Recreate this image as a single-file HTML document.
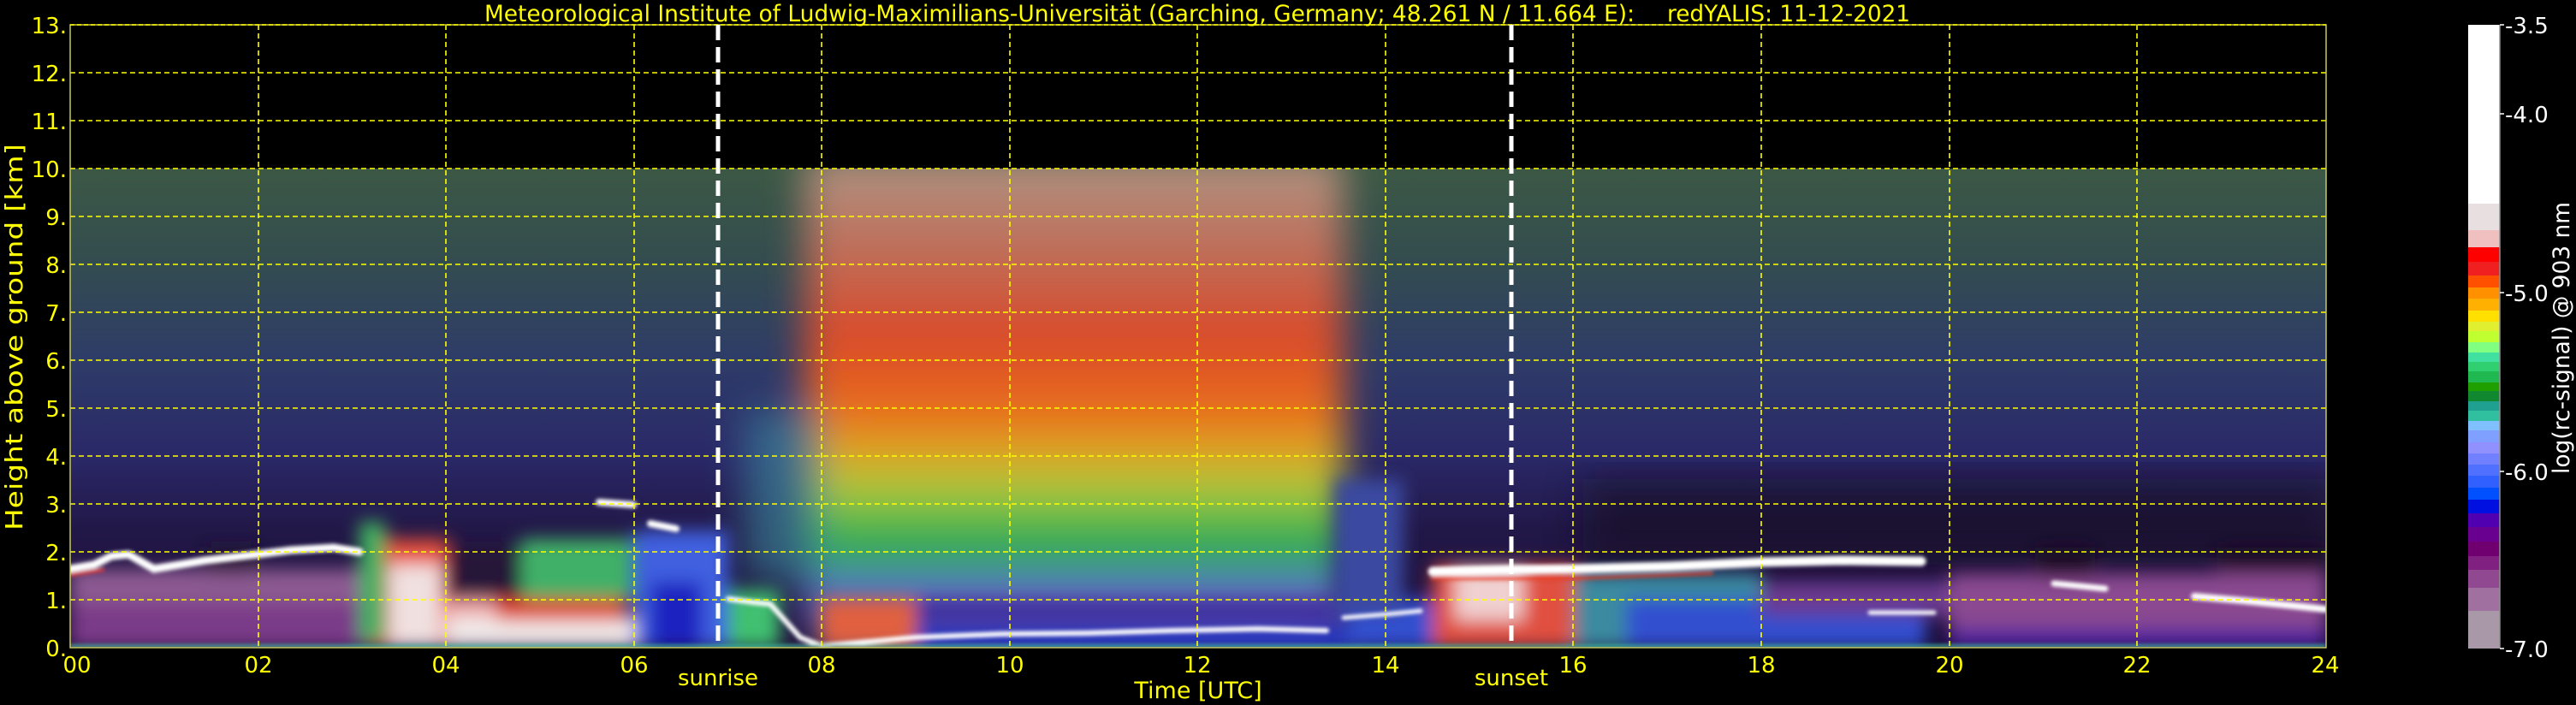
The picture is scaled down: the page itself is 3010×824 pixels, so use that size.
<!DOCTYPE html>
<html><head><meta charset="utf-8"><style>
html,body{margin:0;padding:0;background:#000;}
svg{display:block;}
text{font-family:"DejaVu Sans","Liberation Sans",sans-serif;}
</style></head><body>
<svg width="3010" height="824" viewBox="0 0 3010 824" xmlns="http://www.w3.org/2000/svg">
<defs>
<linearGradient id="bg" x1="0" y1="197" x2="0" y2="757" gradientUnits="userSpaceOnUse">
<stop offset="0" stop-color="#3c5844"/>
<stop offset="0.2" stop-color="#334c50"/>
<stop offset="0.4" stop-color="#2e3c68"/>
<stop offset="0.6" stop-color="#2a2868"/>
<stop offset="0.75" stop-color="#221848"/>
<stop offset="1" stop-color="#1a0c36"/>
</linearGradient>
<linearGradient id="mid" x1="0" y1="197" x2="0" y2="757" gradientUnits="userSpaceOnUse">
<stop offset="0" stop-color="#b0907e"/>
<stop offset="0.15" stop-color="#bc725e"/>
<stop offset="0.35" stop-color="#d84a2a"/>
<stop offset="0.5" stop-color="#e86a1e"/>
<stop offset="0.6" stop-color="#dcaa22"/>
<stop offset="0.68" stop-color="#a0c840"/>
<stop offset="0.76" stop-color="#38b050"/>
<stop offset="0.82" stop-color="#30a060"/>
<stop offset="0.88" stop-color="#6078e0"/>
<stop offset="0.93" stop-color="#502890"/>
<stop offset="0.97" stop-color="#d0d0e8"/>
<stop offset="1" stop-color="#2040e0"/>
</linearGradient>
<filter id="b1" x="-20%" y="-20%" width="140%" height="140%"><feGaussianBlur stdDeviation="22"/></filter>
<filter id="b2" x="-20%" y="-20%" width="140%" height="140%"><feGaussianBlur stdDeviation="10"/></filter>
<filter id="b3" x="-20%" y="-20%" width="140%" height="140%"><feGaussianBlur stdDeviation="2"/></filter>
<clipPath id="pc"><rect x="82" y="197" width="2636" height="560"/></clipPath>
</defs>

<g clip-path="url(#pc)">
<rect x="82" y="197" width="2636" height="560" fill="url(#bg)"/>
<rect x="1850" y="560" width="880" height="100" fill="#120a22" opacity="0.6" filter="url(#b1)"/>
<g filter="url(#b1)">
<rect x="940" y="180" width="630" height="560" fill="url(#mid)"/>
<rect x="870" y="480" width="90" height="200" fill="#3a90a0" opacity="0.6"/>
</g>
<g filter="url(#b2)">
<rect x="82" y="665" width="350" height="92" fill="#8c5a92"/>
<rect x="82" y="705" width="350" height="52" fill="#7a3a88"/>
<rect x="240" y="640" width="60" height="30" fill="#241430"/>
<rect x="433" y="630" width="90" height="127" fill="#e8503a"/>
<rect x="455" y="660" width="60" height="97" fill="#f0e0e0"/>
<rect x="420" y="610" width="30" height="140" fill="#40b060"/>
<rect x="521" y="640" width="90" height="60" fill="#261838"/>
<rect x="521" y="700" width="100" height="57" fill="#f0a0a0"/>
<rect x="521" y="720" width="220" height="37" fill="#f0e8e8"/>
<rect x="580" y="700" width="150" height="25" fill="#e04020"/>
<rect x="609" y="630" width="130" height="70" fill="#40b068"/>
<rect x="741" y="620" width="110" height="137" fill="#4060e0"/>
<rect x="760" y="680" width="60" height="77" fill="#1a20c0"/>
<rect x="851" y="690" width="60" height="67" fill="#40c070"/>
<rect x="960" y="700" width="110" height="57" fill="#e06040"/>
<rect x="1070" y="700" width="500" height="30" fill="#4030a0"/>
<rect x="1070" y="735" width="520" height="22" fill="#2038d0"/>
<rect x="1574" y="700" width="100" height="57" fill="#3050d0"/>
<rect x="1560" y="560" width="80" height="160" fill="#3a4aa0"/>
<rect x="1674" y="660" width="170" height="97" fill="#e05040"/>
<rect x="1700" y="665" width="80" height="60" fill="#f0d0d0"/>
<rect x="1839" y="670" width="220" height="87" fill="#3a8aa0"/>
<rect x="1900" y="700" width="350" height="57" fill="#3050d0"/>
<rect x="2058" y="680" width="220" height="40" fill="#6a3a90"/>
<rect x="2278" y="670" width="440" height="87" fill="#8a4a90"/>
<rect x="2278" y="735" width="440" height="22" fill="#5020a0"/>
<rect x="2378" y="640" width="70" height="35" fill="#1a1026"/>
<rect x="2590" y="640" width="128" height="30" fill="#1a1026"/>
</g>
<g filter="url(#b3)" fill="none" stroke-linecap="round">
<path d="M82 665 L110 660 L130 650 L150 648 L180 665 L240 655 L300 648 L340 643 L390 640 L420 645" stroke="#fff" stroke-width="9"/>
<path d="M82 672 L120 666" stroke="#e04040" stroke-width="4"/>
<path d="M1674 668 L1760 666 L1840 665 L1950 662 L2058 657 L2150 655 L2245 656" stroke="#fff" stroke-width="11"/>
<path d="M1674 676 L1840 676 L2000 670" stroke="#f04020" stroke-width="4" opacity="0.8"/>
<path d="M2564 697 L2620 702 L2680 708 L2717 712" stroke="#fff" stroke-width="8"/>
<path d="M2400 682 L2460 688" stroke="#fff" stroke-width="7"/>
<path d="M2185 716 L2260 716" stroke="#fff" stroke-width="5"/>
<path d="M700 587 L740 590 M760 612 L790 618" stroke="#fff" stroke-width="8"/>
<path d="M851 700 L880 704 L900 706 L935 745 L960 755 L1070 745 L1170 741 L1270 740 L1370 737 L1470 735 L1550 737" stroke="#fff" stroke-width="6"/>
<path d="M1570 722 L1620 718 L1660 714" stroke="#fff" stroke-width="5"/>
<path d="M82 755 L2717 755" stroke="#40c0a0" stroke-width="3"/>
</g>
</g>

<g stroke="#ffff00" stroke-width="1.6" stroke-dasharray="6,4" fill="none">
<path d="M82 85H2718M82 141H2718M82 197H2718M82 253H2718M82 309H2718M82 365H2718M82 421H2718M82 477H2718M82 533H2718M82 589H2718M82 645H2718M82 701H2718"/>
<path d="M302 29V757M521 29V757M741 29V757M960 29V757M1180 29V757M1399 29V757M1619 29V757M1838 29V757M2058 29V757M2278 29V757M2497 29V757"/>
</g>
<rect x="82" y="29" width="2636" height="728" fill="none" stroke="#c8c860" stroke-width="1.5"/>
<path d="M82 29H2718" stroke="#ffff00" stroke-width="1.5" stroke-dasharray="5,3"/>
<g stroke="#fff" stroke-width="5" stroke-dasharray="18,8">
<path d="M839 29V757"/><path d="M1766 29V757"/>
</g>

<text x="566" y="25" font-size="27" fill="#ffff00" textLength="1344" lengthAdjust="spacingAndGlyphs">Meteorological Institute of Ludwig-Maximilians-Universität (Garching, Germany; 48.261 N / 11.664 E):</text>
<text x="1948" y="25" font-size="27" fill="#ffff00" textLength="284" lengthAdjust="spacingAndGlyphs">redYALIS: 11-12-2021</text>

<g font-size="26" fill="#ffff00" text-anchor="end">
<text x="78" y="39">13.</text><text x="78" y="95">12.</text><text x="78" y="151">11.</text><text x="78" y="207">10.</text>
<text x="78" y="263">9.</text><text x="78" y="319">8.</text><text x="78" y="375">7.</text><text x="78" y="431">6.</text>
<text x="78" y="487">5.</text><text x="78" y="543">4.</text><text x="78" y="599">3.</text><text x="78" y="655">2.</text>
<text x="78" y="711">1.</text><text x="78" y="767">0.</text>
</g>
<text transform="translate(26,394) rotate(-90)" font-size="28" fill="#ffff00" text-anchor="middle" textLength="452" lengthAdjust="spacingAndGlyphs">Height above ground [km]</text>

<g font-size="26" fill="#ffff00" text-anchor="middle">
<text x="90" y="786">00</text><text x="302" y="786">02</text><text x="521" y="786">04</text><text x="741" y="786">06</text>
<text x="960" y="786">08</text><text x="1180" y="786">10</text><text x="1399" y="786">12</text><text x="1619" y="786">14</text>
<text x="1838" y="786">16</text><text x="2058" y="786">18</text><text x="2278" y="786">20</text><text x="2497" y="786">22</text>
<text x="2717" y="786">24</text>
<text x="839" y="801">sunrise</text><text x="1766" y="801">sunset</text>
<text x="1400" y="816" font-size="27">Time [UTC]</text>
</g>

<g>
<rect x="2884" y="29" width="37" height="209" fill="#ffffff"/>
<rect x="2884" y="238" width="37" height="31" fill="#e8e0e0"/>
<rect x="2884" y="269" width="37" height="20" fill="#f0c0c0"/>
<rect x="2884" y="289" width="37" height="17" fill="#ff0000"/>
<rect x="2884" y="306" width="37" height="16" fill="#f02020"/>
<rect x="2884" y="322" width="37" height="14" fill="#ff5000"/>
<rect x="2884" y="336" width="37" height="13" fill="#ff9000"/>
<rect x="2884" y="349" width="37" height="14" fill="#ffb000"/>
<rect x="2884" y="363" width="37" height="13" fill="#ffe000"/>
<rect x="2884" y="376" width="37" height="11" fill="#e0f030"/>
<rect x="2884" y="387" width="37" height="13" fill="#c0ff30"/>
<rect x="2884" y="400" width="37" height="12" fill="#80ff80"/>
<rect x="2884" y="412" width="37" height="11" fill="#40e0a0"/>
<rect x="2884" y="423" width="37" height="11" fill="#30d070"/>
<rect x="2884" y="434" width="37" height="13" fill="#20b850"/>
<rect x="2884" y="447" width="37" height="10" fill="#20a000"/>
<rect x="2884" y="457" width="37" height="12" fill="#108830"/>
<rect x="2884" y="469" width="37" height="11" fill="#20a090"/>
<rect x="2884" y="480" width="37" height="12" fill="#30c0a0"/>
<rect x="2884" y="492" width="37" height="11" fill="#80c0ff"/>
<rect x="2884" y="503" width="37" height="14" fill="#80a0ff"/>
<rect x="2884" y="517" width="37" height="13" fill="#9090ff"/>
<rect x="2884" y="530" width="37" height="13" fill="#7080ff"/>
<rect x="2884" y="543" width="37" height="13" fill="#5070ff"/>
<rect x="2884" y="556" width="37" height="14" fill="#3060ff"/>
<rect x="2884" y="570" width="37" height="14" fill="#0050ff"/>
<rect x="2884" y="584" width="37" height="16" fill="#0010e0"/>
<rect x="2884" y="600" width="37" height="16" fill="#5000b0"/>
<rect x="2884" y="616" width="37" height="17" fill="#6a0090"/>
<rect x="2884" y="633" width="37" height="17" fill="#700070"/>
<rect x="2884" y="650" width="37" height="16" fill="#802080"/>
<rect x="2884" y="666" width="37" height="21" fill="#904890"/>
<rect x="2884" y="687" width="37" height="27" fill="#a070a0"/>
<rect x="2884" y="714" width="37" height="44" fill="#a898a8"/>
<path d="M2921 29V758" stroke="#909090" stroke-width="1.5"/>
<g stroke="#fff" stroke-width="1.5"><path d="M2921 29h5M2921 133h5M2921 342h5M2921 551h5M2921 758h5"/></g>
<g font-size="26" fill="#ffffff">
<text x="2927" y="39">-3.5</text><text x="2927" y="143">-4.0</text><text x="2927" y="352">-5.0</text>
<text x="2927" y="561">-6.0</text><text x="2927" y="768">-7.0</text>
</g>
<text transform="translate(3002,395) rotate(-90)" font-size="27" fill="#ffffff" text-anchor="middle" textLength="318" lengthAdjust="spacingAndGlyphs">log(rc-signal) @ 903 nm</text>
</g>
</svg>
</body></html>
